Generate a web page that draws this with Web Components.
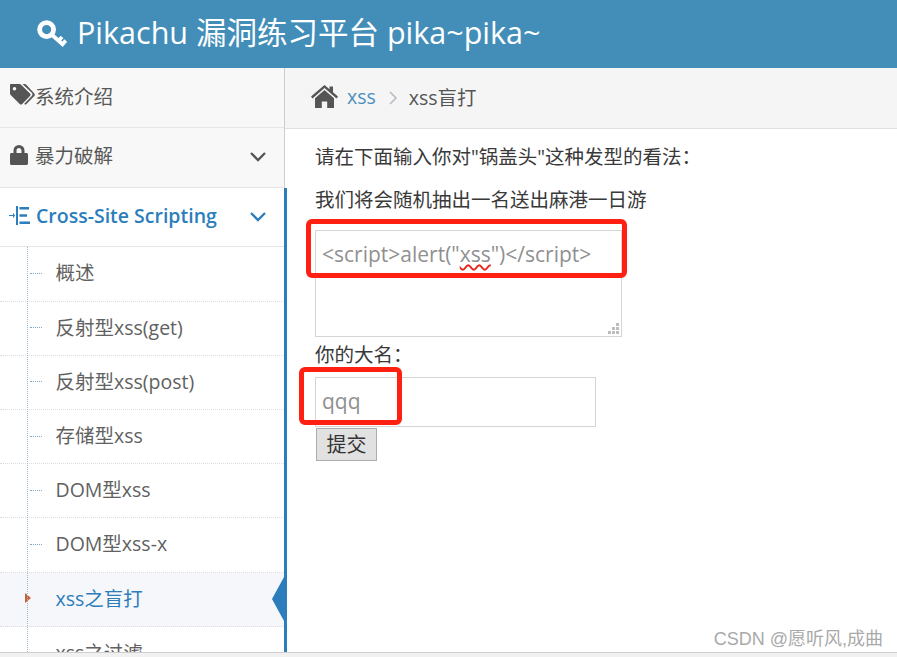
<!DOCTYPE html>
<html lang="zh">
<head>
<meta charset="utf-8">
<title>Pikachu</title>
<style>
  html, body { margin: 0; height: 100%; }
  body {
    font-family: "Open Sans", "Noto Sans CJK SC", sans-serif;
    font-size: 19.5px;
    color: #393939;
    background: #fff;
    overflow: hidden;
  }
</style>
</head>
<body>
<pk-page>
  <pk-header slot="header">Pikachu 漏洞练习平台 pika~pika~</pk-header>
  <pk-sidebar slot="sidebar">
    <pk-nav icon="tags" gap="0" drop>系统介绍</pk-nav>
    <pk-nav icon="lock" gap="7" arrow>暴力破解</pk-nav>
    <pk-group>
      <pk-nav icon="indent" gap="5" arrow open>Cross-Site Scripting</pk-nav>
      <pk-subitem>概述</pk-subitem>
      <pk-subitem>反射型xss(get)</pk-subitem>
      <pk-subitem>反射型xss(post)</pk-subitem>
      <pk-subitem>存储型xss</pk-subitem>
      <pk-subitem>DOM型xss</pk-subitem>
      <pk-subitem>DOM型xss-x</pk-subitem>
      <pk-subitem active>xss之盲打</pk-subitem>
      <pk-subitem>xss之过滤</pk-subitem>
    </pk-group>
  </pk-sidebar>
  <pk-breadcrumb slot="crumbs" link="xss" current="xss盲打"></pk-breadcrumb>
  <pk-form slot="main"></pk-form>
</pk-page>

<script>
const icons = {
  key: `<svg width="30" height="28" viewBox="0 0 30 28"><circle cx="9.6" cy="9.6" r="7" fill="none" stroke="currentColor" stroke-width="4.8"/><path d="M14.5 14.5 27 25.5M21.5 20.8l3.6-3.8M25.4 24.2l3.4-3.6" fill="none" stroke="currentColor" stroke-width="3.8"/></svg>`,
  tags: `<svg width="25" height="22" viewBox="0 0 25 22"><path fill="currentColor" fill-rule="evenodd" d="M1 0h8.5c.6 0 1.2.3 1.6.7L20 9.6c.7.7.7 1.8 0 2.5l-7.800 7.800c-.7.7-1.800.7-2.500 0L.7 10.900C.3 10.500 0 10 0 9.400V1c0-.6.400-1 1-1zM4.500 3a1.800 1.800 0 1 0 0 3.600 1.800 1.800 0 0 0 0-3.600z"/><path fill="currentColor" d="M12.500 0h2.300c.6 0 1.100.3 1.500.7l8 8.900c.7.7.7 1.800 0 2.500l-7.800 7.800c-.7.7-1.800.7-2.400.1l7.700-8c.9-1 .9-2.300 0-3.200z"/></svg>`,
  lock: `<svg width="18" height="20" viewBox="0 0 18 20"><path fill="currentColor" fill-rule="evenodd" d="M3.500 8V5.500a5.500 5.500 0 0 1 11 0V8h2c.8 0 1.500.7 1.500 1.500v9c0 .8-.7 1.500-1.500 1.500h-15C.7 20 0 19.300 0 18.500v-9C0 8.700.7 8 1.500 8zM6.500 8h5V5.500a2.500 2.500 0 0 0-5 0z"/></svg>`,
  indent: `<svg width="22" height="19" viewBox="0 0 22 19"><path fill="currentColor" d="M0 9h4V6.800L6 9.500 4 12.200V10H0zM7 0h2v19H7zM10.500 1H20v2.600h-9.500zM10.500 8.200H18v2.600h-7.500zM10.500 15.400H21V18H10.500z"/></svg>`,
  home: `<svg width="27" height="23" viewBox="0 0 27 23"><path fill="currentColor" d="M13.500 0 18.500 4.300V1.500h3.500v5.800l5 4.300-1.500 1.800L13.500 3 1.500 13.400 0 11.600z"/><path fill="currentColor" d="M13.500 5 23 13.200V23h-6.800v-6.500h-5.400V23H4v-9.800z"/></svg>`,
  chevron: `<svg width="16" height="10" viewBox="0 0 16 10"><path d="M1 1l7 7 7-7" fill="none" stroke="currentColor" stroke-width="2.300"/></svg>`
};

class pkPage extends HTMLElement {
  constructor() {
    super();
    this.attachShadow({ mode: "open" });
    this.shadowRoot.innerHTML = `
    <style>
      :host { display: flex; flex-direction: column; height: 657px; position: relative; overflow: hidden; }
      .body { flex: 1; min-height: 0; display: flex; }
      .side { width: 285px; flex: none; position: relative; z-index: 1; }
      .main { flex: 1; min-width: 0; }
      .strip { height: 5px; flex: none; background: #f1f1f1; border-top: 1px solid #cfcfcf; box-sizing: border-box; position: relative; z-index: 2; }
      .mark {
        position: absolute; right: 14px; top: 624px;
        font: 18px "Liberation Sans", "Noto Sans CJK SC", sans-serif;
        color: #a9a9a9; white-space: nowrap;
      }
    </style>
    <slot name="header"></slot>
    <div class="body">
      <div class="side"><slot name="sidebar"></slot></div>
      <div class="main"><slot name="crumbs"></slot><slot name="main"></slot></div>
    </div>
    <div class="strip"></div>
    <div class="mark">CSDN @愿听风,成曲</div>`;
  }
}

class pkHeader extends HTMLElement {
  constructor() {
    super();
    this.attachShadow({ mode: "open" });
    this.shadowRoot.innerHTML = `
    <style>
      :host {
        display: flex; align-items: center; gap: 10px;
        height: 68px; box-sizing: border-box; padding: 0 0 2px 37px;
        background: #438eb9; color: #fff; font-size: 30.5px; white-space: nowrap;
      }
      svg { display: block; margin-top: 1px; }
      span { margin-top: -5px; }
    </style>
    ${icons.key}<span><slot></slot></span>`;
  }
}

class pkSidebar extends HTMLElement {
  constructor() {
    super();
    this.attachShadow({ mode: "open" });
    this.shadowRoot.innerHTML = `
    <style>
      :host { display: block; height: 100%; background: #f2f2f2; }
      ::slotted(pk-nav) { border-right: 1px solid #ccc; }
    </style>
    <slot></slot>`;
  }
}

class pkNav extends HTMLElement {
  connectedCallback() {
    const open = this.hasAttribute("open");
    const drop = this.hasAttribute("drop") ? 2 : 0;
    const arrow = this.hasAttribute("arrow") ? `<span class="chev">${icons.chevron}</span>` : "";
    const gap = this.getAttribute("gap") || "8";
    this.attachShadow({ mode: "open" });
    this.shadowRoot.innerHTML = `
    <style>
      :host {
        display: flex; align-items: center; box-sizing: border-box;
        height: 59.8px; padding: 0 18px ${open ? 2 : 5}px 10px; gap: ${gap}px;
        background: ${open ? "#fff" : "#f8f8f8"};
        border-bottom: 1px solid #e5e5e5;
        color: ${open ? "#2b7dbc" : "#585858"};
        font-weight: ${open ? 600 : 400};
        white-space: nowrap;
      }
      .ico { color: ${open ? "#2b7dbc" : "#555"}; display: block; line-height: 0; margin-left: ${open ? -1 : 0}px; }
      .label { flex: 1; margin-top: ${drop}px; }
      .chev { line-height: 0; margin-top: ${open ? 2 : 5}px; color: ${open ? "#2b7dbc" : "#555"}; }
    </style>
    <span class="ico">${icons[this.getAttribute("icon")]}</span>
    <span class="label"><slot></slot></span>${arrow}`;
  }
}

class pkGroup extends HTMLElement {
  constructor() {
    super();
    this.attachShadow({ mode: "open" });
    this.shadowRoot.innerHTML = `
    <style>
      :host {
        display: block; position: relative; height: 480px;
        background: #fff; margin-right: -2px;
        border-right: 3px solid #2b7dbc; overflow: hidden;
      }
      .rail {
        position: absolute; left: 27px; top: 59px; bottom: 0;
        border-left: 1px dotted #9dbdd6;
      }
    </style>
    <slot></slot><div class="rail"></div>`;
  }
}

class pkSubitem extends HTMLElement {
  connectedCallback() {
    const active = this.hasAttribute("active");
    this.attachShadow({ mode: "open" });
    this.shadowRoot.innerHTML = `
    <style>
      :host {
        display: flex; align-items: center; box-sizing: border-box; position: relative;
        height: 54.2px; padding: 0 0 4px 55.5px;
        border-bottom: 1px dotted #dcdcdc;
        background: ${active ? "#f5f7fa" : "#fff"};
        color: ${active ? "#2b7dbc" : "#616161"};
        white-space: nowrap;
      }
      .tick { position: absolute; left: 30px; top: 50%; width: 12px; border-top: 1px dotted #7ea7c7; margin-top: -1px; }
      .caret { position: absolute; left: 25px; top: 50%; margin-top: -6px; border-left: 6px solid #c8603a; border-top: 5.500px solid transparent; border-bottom: 5.500px solid transparent; }
      .point { position: absolute; right: 0; top: 50%; margin-top: -22px; border-right: 12px solid #2b7dbc; border-top: 22px solid transparent; border-bottom: 22px solid transparent; }
    </style>
    ${active ? '<span class="caret"></span><span class="point"></span>' : '<span class="tick"></span>'}
    <slot></slot>`;
  }
}

class pkBreadcrumb extends HTMLElement {
  connectedCallback() {
    this.attachShadow({ mode: "open" });
    this.shadowRoot.innerHTML = `
    <style>
      :host {
        display: flex; align-items: center; box-sizing: border-box;
        height: 61px; padding: 0 0 4px 26px;
        background: #f5f5f5; border-bottom: 1px solid #e0e0e0; color: #555;
      }
      .home { line-height: 0; margin-right: 9px; color: #555; }
      a { color: #4c8fbd; text-decoration: none; }
      .sep { line-height: 0; margin: 4px 11px 0 13px; }
    </style>
    <span class="home">${icons.home}</span>
    <a href="#">${this.getAttribute("link")}</a>
    <span class="sep"><svg width="9" height="14" viewBox="0 0 9 14"><path d="M1 1l6 6-6 6" fill="none" stroke="#b8bcc4" stroke-width="1.600"/></svg></span>
    <span>${this.getAttribute("current")}</span>`;
  }
}

class pkMark extends HTMLElement {
  constructor() {
    super();
    this.attachShadow({ mode: "open" });
    this.shadowRoot.innerHTML = `
    <style>
      :host {
        position: absolute; box-sizing: border-box;
        border: 5px solid #ff2012; border-radius: 6px; pointer-events: none;
      }
    </style>`;
  }
}

class pkForm extends HTMLElement {
  constructor() {
    super();
    this.attachShadow({ mode: "open" });
    this.shadowRoot.innerHTML = `
    <style>
      :host { display: block; position: relative; padding: 12px 0 0 30px; color: #393939; line-height: 30px; }
      p { margin: 0; white-space: nowrap; }
      p + p { margin-top: 13px; }
      .colon { font-family: "Noto Sans CJK TC", sans-serif; }
      .area, .field {
        box-sizing: border-box; border: 1px solid #d5d5d5; background: #fff; color: #909090; white-space: nowrap; font-size: 21px;
      }
      .area { position: relative; width: 307px; height: 107px; margin-top: 15px; padding: 8px 6px; }
      .typo { text-decoration: underline wavy #e8251b; text-decoration-thickness: 1.500px; text-underline-offset: 2px; }
      .grip { position: absolute; right: 2px; bottom: 2px; display: block; }
      .label { display: block; margin-top: 2px; }
      .field { width: 281px; height: 50px; margin-top: 7px; padding: 8px 6px; }
      button {
        display: block; box-sizing: border-box; width: 61px; height: 33px; margin: 1px 0 0 1px; padding: 0;
        font: inherit; font-size: 20px; color: #333; background: #e1e1e1; border: 1px solid #adadad;
      }
      pk-mark.a { left: 21px; top: 90px; width: 321px; height: 59px; }
      pk-mark.b { left: 14px; top: 238px; width: 103px; height: 58px; }
    </style>
    <p>请在下面输入你对"锅盖头"这种发型的看法<span class="colon">：</span></p>
    <p>我们将会随机抽出一名送出麻港一日游</p>
    <div class="area">&lt;script&gt;alert("<span class="typo">xss</span>")&lt;/script&gt;
      <svg class="grip" width="11" height="11" viewBox="0 0 11 11"><path fill="#bdbdbd" d="M8 0h3v3H8zM4 4h3v3H4zM8 4h3v3H8zM0 8h3v3H0zM4 8h3v3H4zM8 8h3v3H8z"/></svg>
    </div>
    <span class="label">你的大名<span class="colon">：</span></span>
    <div class="field">qqq</div>
    <button type="button">提交</button>
    <pk-mark class="a"></pk-mark>
    <pk-mark class="b"></pk-mark>`;
  }
}

customElements.define('pk-mark', pkMark);
customElements.define('pk-page', pkPage);
customElements.define('pk-header', pkHeader);
customElements.define('pk-sidebar', pkSidebar);
customElements.define('pk-nav', pkNav);
customElements.define('pk-group', pkGroup);
customElements.define('pk-subitem', pkSubitem);
customElements.define('pk-breadcrumb', pkBreadcrumb);
customElements.define('pk-form', pkForm);
</script>
</body>
</html>
